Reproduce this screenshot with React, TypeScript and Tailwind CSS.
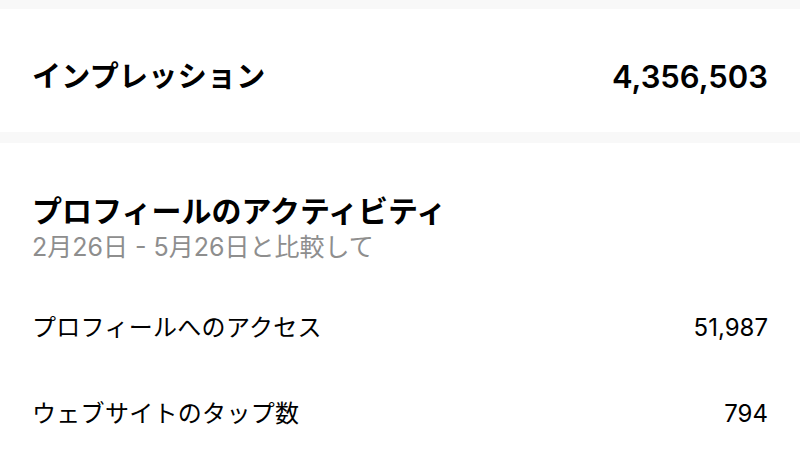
const font = { fontFamily: 'Inter, "Noto Sans CJK JP", sans-serif' };

type Row = { label: string; value: string };

const rows: Row[] = [
  { label: 'プロフィールへのアクセス', value: '51,987' },
  { label: 'ウェブサイトのタップ数', value: '794' },
];

export default function App() {
  return (
    <div className="w-[800px] h-[452px] overflow-hidden bg-white text-black" style={font}>
      {/* top band */}
      <div className="h-[9px] bg-[#f8f8f8]" />

      {/* Impressions */}
      <div className="h-[123px] px-8 pt-3 flex items-center justify-between">
        <span className="text-[29px] leading-[36px] font-bold tracking-[0.3px]">インプレッション</span>
        <span className="text-[31px] leading-[36px] font-semibold">4,356,503</span>
      </div>

      <div className="h-[11px] bg-[#f8f8f8]" />

      {/* Profile activity */}
      <div className="px-8 pt-[50px]">
        <h2 className="text-[30px] leading-[36px] font-bold">プロフィールのアクティビティ</h2>
        <p className="mt-[3px] text-[25px] leading-[30px] text-[#8e8e8e]">2月26日 - 5月26日と比較して</p>

        <div className="mt-[23px]">
          {rows.map((r) => (
            <div key={r.label} className="h-[86px] flex items-center justify-between">
              <span className="text-[24px] leading-[30px] tracking-[0.3px]">{r.label}</span>
              <span className="text-[24px] leading-[30px]">{r.value}</span>
            </div>
          ))}
        </div>
      </div>
    </div>
  );
}
